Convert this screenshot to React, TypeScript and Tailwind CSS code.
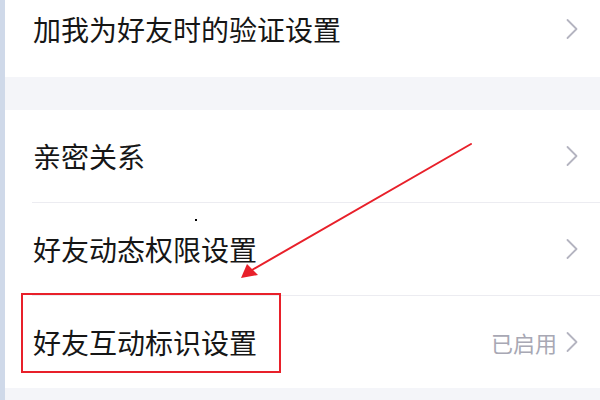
import { ChevronRight } from 'lucide-react';

const rows = [
  { label: '亲密关系' },
  { label: '好友动态权限设置' },
  { label: '好友互动标识设置', value: '已启用' },
];

function Arrow() {
  return <ChevronRight className="w-[36px] h-[36px] text-[#b4b4c0] shrink-0" strokeWidth={1.2} />;
}

function Row({ label, value }: { label: string; value?: string }) {
  return (
    <div className="h-[92px] flex items-center pl-[28px] pr-[10px]">
      <span className="flex-1 text-[28px] text-[#161616] leading-none">{label}</span>
      {value && <span className="text-[22px] text-[#a8a8b4] leading-none -mr-[3px]">{value}</span>}
      <Arrow />
    </div>
  );
}

export default function App() {
  return (
    <div
      className="relative w-[600px] h-[400px] overflow-hidden flex bg-white"
      style={{ fontFamily: '"Noto Sans CJK SC", "Noto Sans", sans-serif' }}
    >
      {/* left edge strip */}
      <div className="w-[5px] bg-[#cfd9e9] shrink-0" />

      <div className="flex-1 flex flex-col">
        <div className="h-[77px] flex items-center pl-[28px] pr-[10px] pb-[20px] bg-white">
          <span className="flex-1 text-[28px] text-[#161616] leading-none">加我为好友时的验证设置</span>
          <Arrow />
        </div>
        <div className="h-[33px] bg-[#f4f5f9]" />
        <div className="bg-white">
          {rows.map((r, i) => (
            <div key={i}>
              {i > 0 && <div className="h-px bg-[#ececf1] ml-[27px]" />}
              <Row label={r.label} value={r.value} />
            </div>
          ))}
        </div>
        <div className="flex-1 bg-[#f4f5f9]" />
      </div>

      {/* annotation: stray dot */}
      <div className="absolute left-[195px] top-[219px] w-[2px] h-[2px] bg-black" />

      {/* annotation: red box */}
      <div className="absolute left-[21px] top-[293px] w-[260px] h-[80px] border-2 border-[#e8202a]" />

      {/* annotation: arrow */}
      <svg className="absolute inset-0" width="600" height="400" viewBox="0 0 600 400">
        <line x1="471" y1="144" x2="252" y2="270" stroke="#e8202a" strokeWidth="2" strokeLinecap="round" />
        <polygon points="241,278 247,264 258,275" fill="#e8202a" />
      </svg>
    </div>
  );
}
